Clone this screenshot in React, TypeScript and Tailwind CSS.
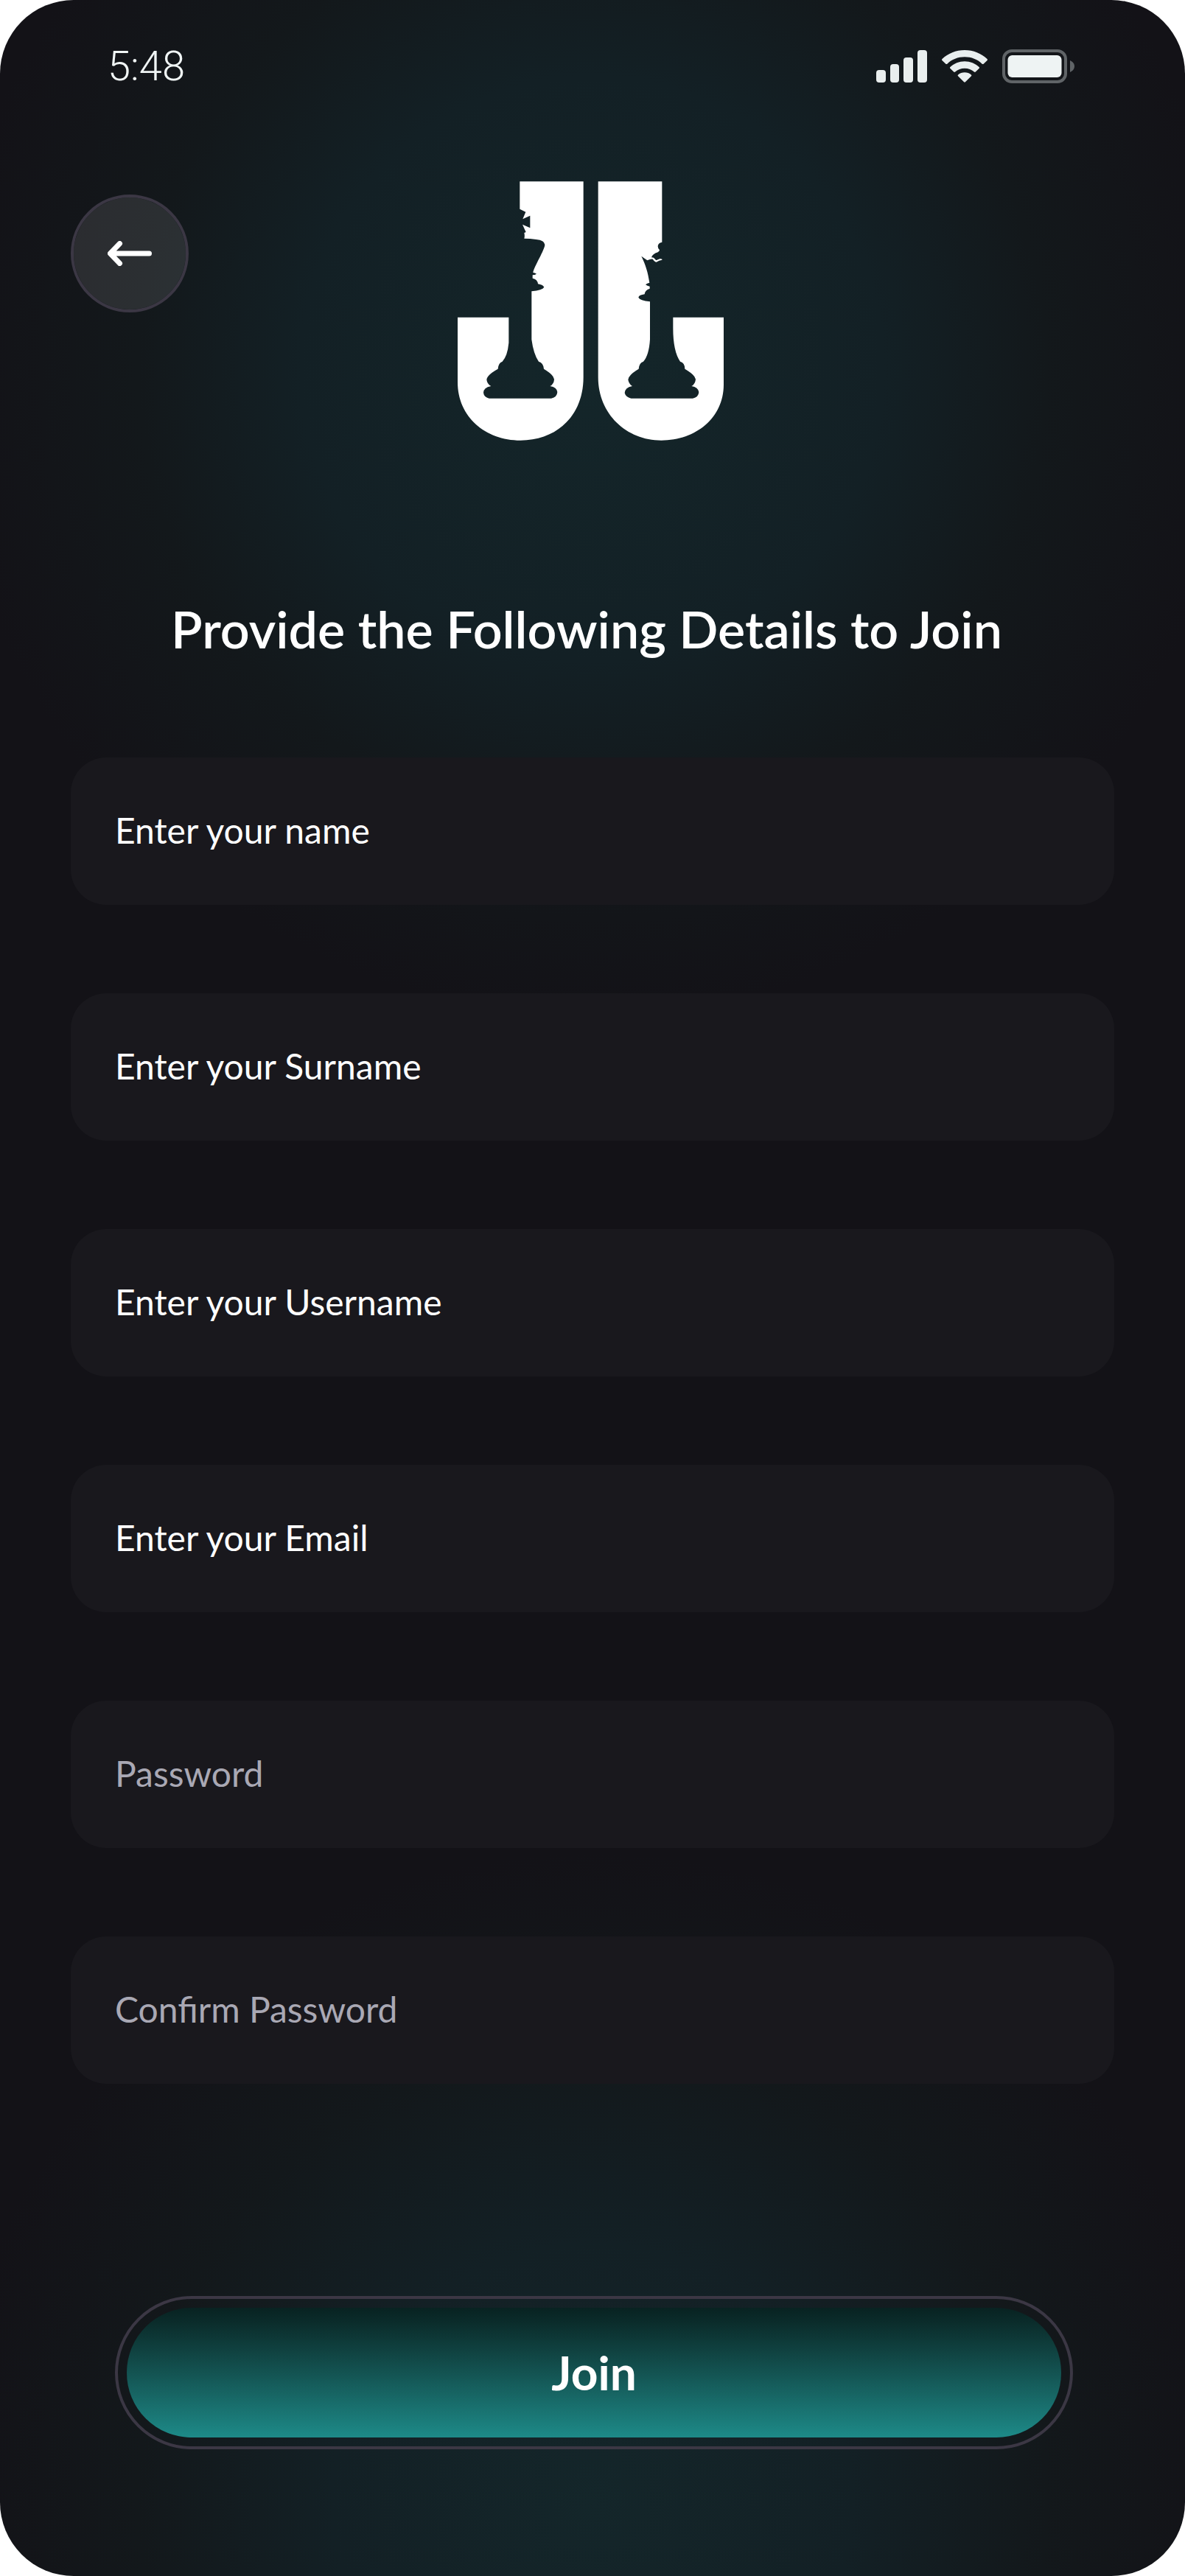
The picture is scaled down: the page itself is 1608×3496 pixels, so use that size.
const fields = [
  { id: "name", label: "Enter your name", type: "text", tone: "placeholder:text-white" },
  { id: "surname", label: "Enter your Surname", type: "text", tone: "placeholder:text-white" },
  { id: "username", label: "Enter your Username", type: "text", tone: "placeholder:text-white" },
  { id: "email", label: "Enter your Email", type: "email", tone: "placeholder:text-white" },
  { id: "password", label: "Password", type: "password", tone: "placeholder:text-[#a9a8b4]" },
  { id: "confirm", label: "Confirm Password", type: "password", tone: "placeholder:text-[#a9a8b4]" },
];

function StatusIcons() {
  return (
    <div className="flex items-center gap-5 text-[#e9eeee]">
      <svg className="h-11 w-[69px]" viewBox="0 0 69 44" fill="currentColor" aria-label="Signal">
        <rect x="0" y="27" width="13" height="17" rx="4" />
        <rect x="19" y="19" width="12" height="25" rx="4" />
        <rect x="37" y="10" width="13" height="34" rx="4" />
        <rect x="56" y="0" width="13" height="44" rx="4" />
      </svg>
      <svg className="h-11 w-[62px]" viewBox="0 0 62 44" fill="currentColor" aria-label="Wi-Fi">
        <path d="M31 0C43 0 53.500 4.500 61.500 12c.6.600.6 1.300.1 1.900l-5 4.800c-.5.500-1.300.5-1.900 0C48.500 12.500 40 9.300 31 9.300S13.500 12.500 7.300 18.700c-.6.500-1.400.5-1.900 0l-5-4.800c-.5-.6-.5-1.300.1-1.900C8.500 4.500 19 0 31 0Z" />
        <path d="M31 15.300c7.600 0 14.400 2.900 19.600 7.600.6.600.6 1.300.1 1.900l-4.900 4.800c-.6.500-1.300.5-1.900 0-3.600-3.200-8-4.900-12.900-4.900s-9.300 1.700-12.900 4.900c-.6.500-1.300.5-1.900 0l-4.900-4.800c-.5-.6-.5-1.300.1-1.900 5.200-4.700 12-7.600 19.600-7.600Z" />
        <path d="M31 30.300c3.400 0 6.500 1.200 8.900 3.200.6.500.6 1.200.1 1.800l-8.100 8c-.6.500-1.200.5-1.800 0l-8.100-8c-.5-.6-.5-1.300.1-1.800 2.400-2 5.500-3.200 8.900-3.200Z" />
      </svg>
      <svg className="h-[46px] w-[98px]" viewBox="0 0 98 46" aria-label="Battery">
        <rect x="2" y="2" width="84" height="42" rx="11" fill="none" stroke="#606467" strokeWidth="4" />
        <rect x="7.500" y="8" width="73" height="30" rx="6" fill="#eef3f3" />
        <path d="M92 15c3.500 1.500 6 4.500 6 8s-2.500 6.500-6 8Z" fill="#606467" />
      </svg>
    </div>
  );
}

function Logo() {
  return (
    <svg className="h-[353px] w-[362px]" viewBox="0 0 1086 1059" role="img" aria-label="JJ logo">
      <g fill="#fff" transform="translate(-35 -32)">
        <path d="M288 33H547V830C547 990 435 1087 291 1087S35 990 35 850V586H243V690Q238 744 217 766Q201 771 199 796Q155 820 153 840Q155 858 171 866Q140 872 140 893Q142 911 163 916H416Q440 911 441 890Q439 871 411 866Q427 858 428 838Q426 820 386 796Q384 771 365 766Q344 736 336 676V480Q380 476 387 463Q381 453 362 450Q360 431 340 427V414Q350 414 356 409Q350 404 342 404C346 380 390 310 390 290Q388 272 355 269Q330 265 306 265Q309 254 306 242L313 239L299 208L330 222V172L300 186L312 157L288 145Z" />
        <path d="M607 33H867V280Q850 284 850 297Q850 306 857 312Q857 317 850 321Q828 328 824 342L833 343L843 354L858 348Q864 347 867 349V353Q858 352 844 361Q838 361 829 349Q821 348 807 354Q799 348 783 337C801 375 809 400 816 445Q806 447 800 453Q807 459 817 460V469Q797 476 796 492Q773 495 771 505Q777 518 818 522V676Q814 740 791 766Q774 771 772 796Q731 820 729 840Q732 858 746 866Q716 872 715 894Q719 911 741 916H992Q1016 911 1017 890Q1014 871 987 866Q1002 858 1004 838Q1001 820 960 796Q960 771 941 766Q912 725 912 630V586H1118V860C1118 995 1005 1087 864 1087S607 980 607 830Z" />
      </g>
    </svg>
  );
}

export default function App() {
  return (
    <main className="overflow-hidden rounded-[100px] bg-[#131217] bg-[radial-gradient(circle_880px_at_50%_500px,#14262a_0%,#132025_45%,#13181b_70%,transparent_100%),radial-gradient(circle_880px_at_50%_calc(100%_-_100px),#14262a_0%,#132025_40%,#13181b_70%,transparent_100%)] pb-[172px] font-['Lato',sans-serif] text-white">
      <header className="flex h-[180px] items-center justify-between pr-[150px] pl-[146px]">
        <time className="font-['Roboto',sans-serif] text-[56px] font-light text-[#f0f5f5]">5:48</time>
        <StatusIcons />
      </header>

      <div className="grid grid-cols-[160px_1fr_160px] px-24 pt-[66px]">
        <button
          type="button"
          aria-label="Back"
          className="mt-[18px] flex size-40 items-center justify-center rounded-full border-4 border-[#3b3744] bg-white/10 bg-clip-padding"
        >
          <svg className="h-[34px] w-[60px]" viewBox="0 0 60 34" fill="none" stroke="#fff" strokeWidth="7" strokeLinecap="round" strokeLinejoin="round">
            <path d="M56.500 17H4M16.500 3.500 3.500 17l13 13.500" />
          </svg>
        </button>
        <div className="flex justify-center pr-1">
          <Logo />
        </div>
      </div>

      <form className="pt-[198px]" onSubmit={(event) => event.preventDefault()}>
        <h1 className="pr-4 text-center text-[70px] leading-[112px] font-semibold">
          Provide the Following Details to Join
        </h1>
        <div className="mt-[119px] flex flex-col gap-[120px] px-24">
          {fields.map((field) => (
            <input
              key={field.id}
              id={field.id}
              type={field.type}
              aria-label={field.label}
              placeholder={field.label}
              className={`h-[200px] w-full rounded-[48px] bg-[#19181d] px-[60px] pb-1 text-[48px] font-normal outline-none placeholder:opacity-100 ${field.tone}`}
            />
          ))}
        </div>
        <div className="mt-[288px] pr-[152px] pl-[156px]">
          <div className="rounded-full border-4 border-[#3b3744] p-3">
            <button
              type="submit"
              className="h-44 w-full rounded-full bg-linear-to-b from-[#082221] to-[#1d8a88] text-[64px] font-bold"
            >
              Join
            </button>
          </div>
        </div>
      </form>
    </main>
  );
}
